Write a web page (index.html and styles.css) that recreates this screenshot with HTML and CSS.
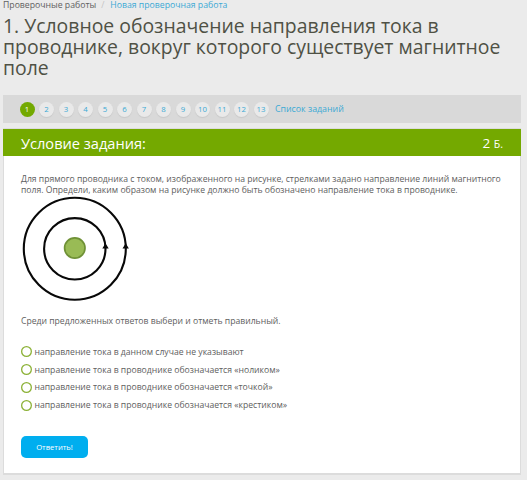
FILE: index.html
```html
<!DOCTYPE html>
<html lang="ru">
<head>
<meta charset="utf-8">
<title>Проверочные работы</title>
<link rel="stylesheet" href="styles.css">
</head>
<body>
<main class="page">
  <nav class="breadcrumbs"><span>Проверочные работы</span><span class="slash">/</span><a>Новая проверочная работа</a></nav>
  <h1 class="title">1. Условное обозначение направления тока в<br>проводнике, вокруг которого существует магнитное<br>поле</h1>
  <nav class="pager">
    <a class="num active">1</a><a class="num">2</a><a class="num">3</a><a class="num">4</a><a class="num">5</a><a class="num">6</a><a class="num">7</a><a class="num">8</a><a class="num">9</a><a class="num">10</a><a class="num">11</a><a class="num">12</a><a class="num">13</a>
    <a class="list">Список заданий</a>
  </nav>
  <section class="card">
    <header class="card-head"><h2>Условие задания:</h2><div class="points">2 <small>Б.</small></div></header>
    <div class="card-body">
      <p class="text">Для прямого проводника с током, изображенного на рисунке, стрелками задано направление линий магнитного<br>поля. Определи, каким образом на рисунке должно быть обозначено направление тока в проводнике.</p>
      <svg class="figure" width="110" height="106" viewBox="0 0 110 106">
        <g fill="none" stroke="#080808" stroke-width="2.1">
          <circle cx="53.8" cy="52.8" r="51"/>
          <circle cx="53.8" cy="52.8" r="30.7"/>
        </g>
        <circle cx="53.8" cy="52" r="10.2" fill="#99bb55" stroke="#6f9136" stroke-width="1.7"/>
        <path d="M84.5 47.2l3.2 5.2h-6.4zM104.7 47.2l3.2 5.2h-6.4z" fill="#080808"/>
      </svg>
      <p class="text prompt">Среди предложенных ответов выбери и отметь правильный.</p>
      <ul class="options">
        <li><i class="radio"></i><span>направление тока в данном случае не указывают</span></li>
        <li><i class="radio"></i><span>направление тока в проводнике обозначается «ноликом»</span></li>
        <li><i class="radio"></i><span>направление тока в проводнике обозначается «точкой»</span></li>
        <li><i class="radio"></i><span>направление тока в проводнике обозначается «крестиком»</span></li>
      </ul>
      <button class="submit">Ответить!</button>
    </div>
  </section>
</main>
</body>
</html>
```
FILE: styles.css
```css
* { box-sizing: border-box; }
body { margin: 0; height: 480px; overflow: hidden; background: #ebebeb; color: #606060; font-family: "Open Sans", sans-serif; font-size: 8.63px; }
h1, h2, p, ul { margin: 0; padding: 0; font-weight: 400; }
.page { width: 521px; padding-left: 3px; white-space: nowrap; }
.breadcrumbs { height: 15px; display: flex; font-size: 8.7px; line-height: 11px; }
.slash { color: #c4c4c4; margin: 0 6px 0 5px; }
a { color: #3ba9d5; }
.title { height: 80px; font-size: 19.4px; line-height: 21px; color: #4f5145; }
.pager { height: 28px; display: flex; align-items: center; padding-left: 16.5px; gap: 4.5px; background: #d9d9d9; }
.num { width: 15px; height: 15px; border-radius: 50%; background: #e9e9e9; font-size: 7.8px; line-height: 15px; text-align: center; box-shadow: 0 1px 1px #c8c8c8; }
.active { background: #73a900; color: #fff; box-shadow: none; }
.list { margin-left: 2px; font-size: 8.8px; }
.card { height: 347px; margin-top: 5px; width: 518px; background: #fff; border: 1px solid #dcdcdc; border-bottom-width: 2px; }
.card-head { height: 27px; margin: 0 -1px; display: flex; justify-content: space-between; align-items: center; padding: 0 18px; background: #74a900; color: #fff; }
h2 { font-size: 14.6px; }
.points { font-size: 13.5px; }
.points small { font-size: 10.5px; }
.card-body { padding: 18px 17px 0; }
.text { line-height: 11px; }
.figure { display: block; }
.prompt { margin-top: 14px; }
.options { list-style: none; margin-top: 16px; }
.options li { height: 17.8px; display: flex; align-items: center; gap: 2.5px; }
.radio { width: 11px; height: 11px; border-radius: 50%; box-shadow: inset 0 0 0 1.3px #8db238; }
.submit { display: block; width: 67px; height: 22px; margin-top: 22px; padding: 0; border: 0; border-radius: 5px; background: #00aeef; color: #fff; font: 7.6px "Open Sans", sans-serif; }
```
